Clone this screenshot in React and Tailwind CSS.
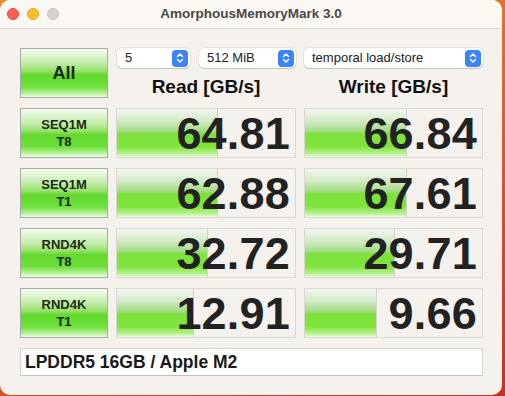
const rows = [
  { name: 'SEQ1M', sub: 'T8', read: '64.81', readFill: 101, write: '66.84', writeFill: 102 },
  { name: 'SEQ1M', sub: 'T1', read: '62.88', readFill: 101, write: '67.61', writeFill: 102 },
  { name: 'RND4K', sub: 'T8', read: '32.72', readFill: 91, write: '29.71', writeFill: 90 },
  { name: 'RND4K', sub: 'T1', read: '12.91', readFill: 77, write: '9.66', writeFill: 72 },
];

const Stepper = () => (
  <span className="w-[16px] h-[17px] rounded-[4px] bg-[#3b83f6] flex items-center justify-center shrink-0">
    <svg width="8" height="12" viewBox="0 0 8 12" fill="none" stroke="white" strokeWidth="1.5" strokeLinecap="round" strokeLinejoin="round">
      <path d="M1.5 4.5 L4 2 L6.5 4.5" />
      <path d="M1.5 7.5 L4 10 L6.5 7.5" />
    </svg>
  </span>
);

const Select = ({ value, className }) => (
  <div className={`h-[20px] bg-white rounded-[5px] shadow-[0_0_0_0.5px_rgba(0,0,0,0.12),0_1px_1px_rgba(0,0,0,0.15)] flex items-center justify-between pl-[8px] pr-[2px] text-[13px] text-[#222] ${className}`}>
    <span>{value}</span>
    <Stepper />
  </div>
);

const TestButton = ({ children, className }) => (
  <div className={`border border-[#a9a9a9] bg-[linear-gradient(to_bottom,#f3fbef_0%,#c6eeb0_28%,#95e169_46%,#62d82d_54%,#6be03a_78%,#b6f095_92%,#f1fcea_100%)] flex flex-col items-center justify-center font-bold text-[#1d2a17] ${className}`}>
    {children}
  </div>
);

const Bar = ({ value, fill }) => (
  <div className="relative h-[50px] border border-[#dad7d2] bg-[#f5f2ee] overflow-hidden">
    <div
      className="absolute left-0 top-0 bottom-0 border-r border-[#d2d2d2] bg-[linear-gradient(to_bottom,#f3f6f2_0%,#d2ebc6_25%,#a4dc86_46%,#7de23b_52%,#7fe43b_78%,#b9f191_93%,#ecfbe2_100%)]"
      style={{ width: fill }}
    />
    <div className="relative h-full flex items-center justify-end pr-[5px] text-[45px] font-bold text-[#222] leading-none tracking-[0.2px]">
      {value}
    </div>
  </div>
);

export default function App() {
  return (
    <div className="w-[505px] h-[396px] bg-[linear-gradient(160deg,#e98a2c_0%,#dc6a22_45%,#c8301f_100%)] font-['Liberation_Sans',Arial,sans-serif]">
      <div className="w-[502px] h-[395px] bg-[#f5f2ee] rounded-[10px] overflow-hidden flex flex-col">
        {/* Title bar */}
        <div className="h-[29px] bg-[#fbf8f4] border-b border-[#d9d5d0] relative flex items-center justify-center shrink-0">
          <div className="absolute left-[7px] top-[8px] flex gap-[8px]">
            <span className="w-[12px] h-[12px] rounded-full bg-[#fe5f57] border border-[#e2463f]" />
            <span className="w-[12px] h-[12px] rounded-full bg-[#febc2e] border border-[#e1a116]" />
            <span className="w-[12px] h-[12px] rounded-full bg-[#d6d3cf] border border-[#c3c0bc]" />
          </div>
          <span className="text-[13.5px] font-bold text-[#4a4845]">AmorphousMemoryMark 3.0</span>
        </div>

        <div className="pt-[19px] pl-[20px] pr-[19px]">
          <div className="grid grid-cols-[88px_180px_179px] gap-x-[8px] gap-y-[10px]">
            {/* Header row */}
            <TestButton className="h-[50px] text-[18px]">All</TestButton>
            <div className="col-span-2 h-[50px] flex flex-col">
              <div className="flex gap-[9px] pl-[1px]">
                <Select value="5" className="w-[73px]" />
                <Select value="512 MiB" className="w-[97px]" />
                <Select value="temporal load/store" className="w-[179px] ml-[-1px]" />
              </div>
              <div className="flex mt-[5px]">
                <div className="w-[180px] text-center text-[19px] font-bold text-[#111]">Read [GB/s]</div>
                <div className="w-[179px] ml-[8px] text-center text-[19px] font-bold text-[#111]">Write [GB/s]</div>
              </div>
            </div>

            {rows.map((r, i) => (
              <div key={i} className="contents">
                <TestButton className="h-[50px] text-[13px] leading-[17px]">
                  <span>{r.name}</span>
                  <span>{r.sub}</span>
                </TestButton>
                <Bar value={r.read} fill={r.readFill} />
                <Bar value={r.write} fill={r.writeFill} />
              </div>
            ))}
          </div>

          {/* Device info */}
          <div className="mt-[10px] h-[28px] w-[463px] bg-white border border-[#d6d3cf] border-b-[#c4c1bd] flex items-center pl-[4px] text-[17.5px] font-bold text-[#1a1a1a]">
            LPDDR5 16GB / Apple M2
          </div>
        </div>
      </div>
    </div>
  );
}
